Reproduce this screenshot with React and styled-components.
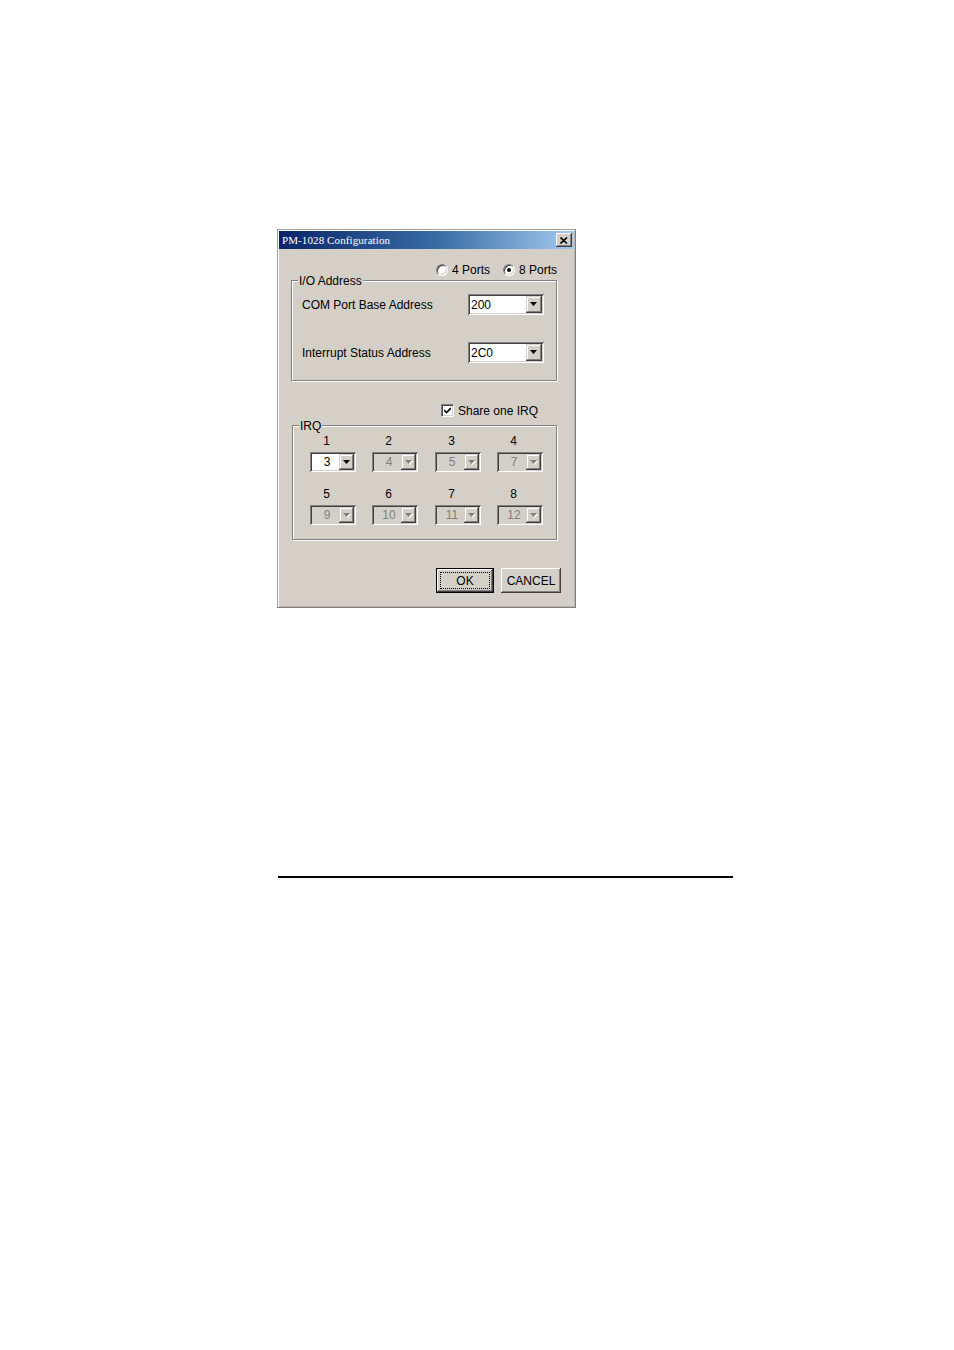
import React from 'react';
import styled, { createGlobalStyle } from 'styled-components';

const Global = createGlobalStyle`
  html, body { margin: 0; padding: 0; background: #fff; }
  body { font-family: "Liberation Sans", Arial, sans-serif; color: #000; }
  * { box-sizing: border-box; }
`;

const Page = styled.div`
  width: 954px;
  height: 1350px;
  padding: 229px 0 0 277px;
`;

const Window = styled.div`
  width: 299px;
  height: 379px;
  background: #d4d0c8;
  padding: 2px;
  box-shadow: inset -1px -1px #808080, inset 1px 1px #a0a0a0, inset 2px 2px #fff, inset -2px -2px #b8b4ac;
  display: flex;
  flex-direction: column;
`;

const TitleBar = styled.div`
  height: 18px;
  flex: none;
  display: flex;
  align-items: center;
  justify-content: space-between;
  padding: 0 2px 0 3px;
  background: linear-gradient(to right, #0a246a 0%, #3a6ea5 55%, #a6caf0 100%);
`;

const Title = styled.span`
  font-family: "Liberation Serif", "Times New Roman", serif;
  font-size: 11px;
  color: #fff;
  letter-spacing: 0.1px;
`;

const CloseButton = styled.div`
  width: 16px;
  height: 14px;
  background: #d4d0c8;
  box-shadow: inset -1px -1px #404040, inset 1px 1px #fff, inset -2px -2px #808080;
  display: flex;
  align-items: center;
  justify-content: center;
`;

const Content = styled.div`
  flex: 1;
  display: flex;
  flex-direction: column;
  padding: 0 0 0 12px;
`;

const RadioRow = styled.div`
  margin-top: 14px;
  height: 14px;
  width: 266px;
  display: flex;
  justify-content: flex-end;
  align-items: center;
  gap: 13px;
`;

const Option = styled.label`
  display: flex;
  align-items: center;
  gap: 4px;
  font-size: 12px;
  line-height: 14px;
`;

const RadioCircle = styled.span`
  width: 12px;
  height: 12px;
  border-radius: 50%;
  background: #fff;
  border: 1px solid;
  border-color: #808080 #fff #fff #808080;
  box-shadow: inset 1px 1px #404040, inset -1px -1px #d4d0c8;
  display: flex;
  align-items: center;
  justify-content: center;
  &::after {
    content: "";
    display: ${p => (p.$checked ? 'block' : 'none')};
    width: 4px;
    height: 4px;
    border-radius: 50%;
    background: #000;
  }
`;

const Group = styled.div`
  position: relative;
  width: ${p => p.$w}px;
  margin-left: ${p => p.$ml || 0}px;
  margin-top: ${p => p.$mt}px;
  border: 1px solid #808080;
  box-shadow: inset 1px 1px #fff, 1px 1px #fff;
`;

const GroupLabel = styled.span`
  position: absolute;
  top: -7px;
  left: ${p => p.$x}px;
  padding: 0 1px;
  background: #d4d0c8;
  font-size: 12px;
  line-height: 14px;
`;

const AddressRows = styled.div`
  display: flex;
  flex-direction: column;
  gap: 27px;
  padding: 13px 12px 17px 10px;
`;

const FieldRow = styled.div`
  display: flex;
  align-items: center;
  justify-content: space-between;
`;

const FieldLabel = styled.span`
  font-size: 12px;
  line-height: 14px;
`;

const Combo = styled.div`
  width: ${p => p.$w}px;
  height: ${p => p.$h}px;
  padding: 2px;
  display: flex;
  background: ${p => (p.$disabled ? '#d4d0c8' : '#fff')};
  box-shadow: inset 1px 1px #808080, inset -1px -1px #fff, inset 2px 2px #404040, inset -2px -2px #d4d0c8;
`;

const ComboText = styled.div`
  flex: 1;
  display: flex;
  align-items: center;
  justify-content: ${p => (p.$center ? 'center' : 'flex-start')};
  padding-left: ${p => (p.$center ? 3 : 1)}px;
  font-size: 12px;
  color: ${p => (p.$disabled ? '#808080' : '#000')};
  background: ${p => (p.$disabled ? '#d4d0c8' : '#fff')};
`;

const ComboArrow = styled.div`
  width: ${p => p.$w}px;
  flex: none;
  background: #d4d0c8;
  box-shadow: inset -1px -1px #404040, inset 1px 1px #d4d0c8, inset -2px -2px #808080, inset 2px 2px #fff;
  display: flex;
  align-items: center;
  justify-content: center;
`;

const CheckRow = styled.div`
  margin-top: 23px;
  margin-left: 150px;
  height: 13px;
  display: flex;
  align-items: center;
  gap: 4px;
  font-size: 12px;
`;

const CheckBox = styled.span`
  width: 13px;
  height: 13px;
  background: #fff;
  border: 1px solid;
  border-color: #808080 #fff #fff #808080;
  box-shadow: inset 1px 1px #404040, inset -1px -1px #d4d0c8;
  display: flex;
  align-items: center;
  justify-content: center;
`;

const IrqGrid = styled.div`
  display: grid;
  grid-template-columns: 62px 63px 62px 62px;
  row-gap: 15px;
  padding: 8px 0 14px 17px;
`;

const IrqCell = styled.div`
  display: flex;
  flex-direction: column;
  gap: 4px;
`;

const IrqLabel = styled.div`
  width: 33px;
  text-align: center;
  font-size: 12px;
  line-height: 14px;
`;

const ButtonRow = styled.div`
  margin-top: 28px;
  width: 270px;
  display: flex;
  justify-content: flex-end;
  gap: 7px;
`;

const Button = styled.button`
  position: relative;
  width: ${p => p.$w}px;
  height: 25px;
  padding: 0;
  border: ${p => (p.$default ? '1px solid #000' : '0')};
  background: #d4d0c8;
  font-family: "Liberation Sans", Arial, sans-serif;
  font-size: 12px;
  color: #000;
  box-shadow: inset -1px -1px #404040, inset 1px 1px #fff, inset -2px -2px #808080;
  &::after {
    content: "";
    display: ${p => (p.$default ? 'block' : 'none')};
    position: absolute;
    inset: 3px;
    border: 1px dotted #000;
  }
`;

const Rule = styled.div`
  margin: 268px 0 0 1px;
  width: 455px;
  height: 2px;
  background: #000;
`;

const Arrow = ({ disabled }) => (
  <svg width="8" height="5" viewBox="0 0 8 5">
    {disabled && <polygon points="1,1 8,1 4.5,5" fill="#fff" />}
    <polygon points="0,0 7,0 3.5,4" fill={disabled ? '#808080' : '#000'} />
  </svg>
);

const ComboBox = ({ value, w, h, arrowW, disabled, center }) => (
  <Combo $w={w} $h={h} $disabled={disabled}>
    <ComboText $center={center} $disabled={disabled}>{value}</ComboText>
    <ComboArrow $w={arrowW}>
      <Arrow disabled={disabled} />
    </ComboArrow>
  </Combo>
);

const irq = [
  ['1', '3'], ['2', '4'], ['3', '5'], ['4', '7'],
  ['5', '9'], ['6', '10'], ['7', '11'], ['8', '12'],
];

export default function App() {
  return (
    <>
      <Global />
      <Page>
        <Window>
          <TitleBar>
            <Title>PM-1028 Configuration</Title>
            <CloseButton>
              <svg width="8" height="7" viewBox="0 0 8 7">
                <path d="M0.5 0.5 L7 6.5 M7 0.5 L0.5 6.5" stroke="#000" strokeWidth="1.6" />
              </svg>
            </CloseButton>
          </TitleBar>
          <Content>
            <RadioRow>
              <Option><RadioCircle />4 Ports</Option>
              <Option><RadioCircle $checked />8 Ports</Option>
            </RadioRow>
            <Group $w={266} $mt={3}>
              <GroupLabel $x={6}>I/O Address</GroupLabel>
              <AddressRows>
                <FieldRow>
                  <FieldLabel>COM Port Base Address</FieldLabel>
                  <ComboBox value="200" w={76} h={21} arrowW={16} />
                </FieldRow>
                <FieldRow>
                  <FieldLabel>Interrupt Status Address</FieldLabel>
                  <ComboBox value="2C0" w={76} h={21} arrowW={16} />
                </FieldRow>
              </AddressRows>
            </Group>
            <CheckRow>
              <CheckBox>
                <svg width="7" height="7" viewBox="0 0 7 7">
                  <path d="M0 3 L2.5 5.5 L7 1" stroke="#000" strokeWidth="1.6" fill="none" />
                </svg>
              </CheckBox>
              Share one IRQ
            </CheckRow>
            <Group $w={265} $ml={1} $mt={8}>
              <GroupLabel $x={6}>IRQ</GroupLabel>
              <IrqGrid>
                {irq.map(([label, value], i) => (
                  <IrqCell key={label}>
                    <IrqLabel>{label}</IrqLabel>
                    <ComboBox value={value} w={46} h={20} arrowW={15} center disabled={i !== 0} />
                  </IrqCell>
                ))}
              </IrqGrid>
            </Group>
            <ButtonRow>
              <Button $w={58} $default>OK</Button>
              <Button $w={60}>CANCEL</Button>
            </ButtonRow>
          </Content>
        </Window>
        <Rule />
      </Page>
    </>
  );
}
